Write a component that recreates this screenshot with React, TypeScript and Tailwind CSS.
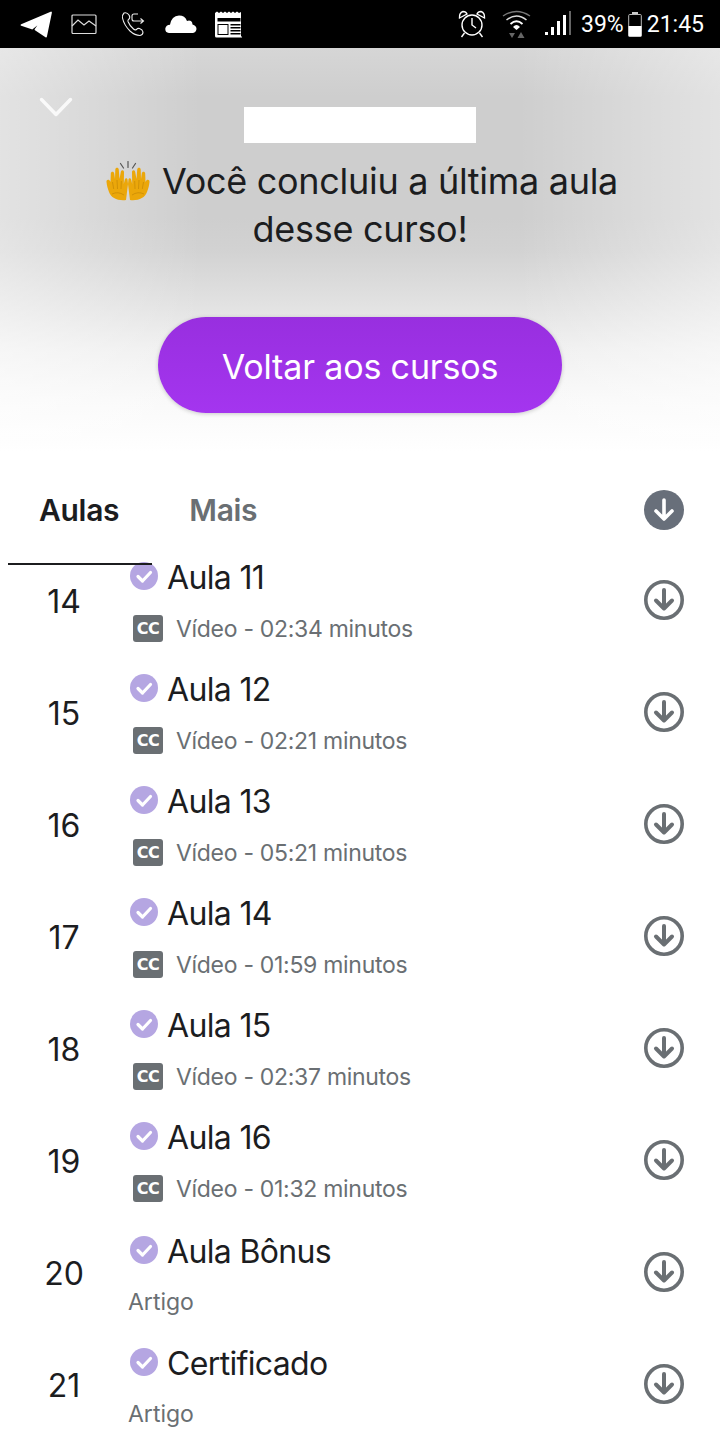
import React from "react";

const font = "font-['Inter','Liberation_Sans',sans-serif]";

function Telegram() {
  return (
    <svg width="33" height="28" viewBox="0 0 33 28" className="shrink-0">
      <path d="M1.500 15 L31 2.500 L26 26.500 L15.500 19.500 L22 10.500 L12 18.500 Z" fill="#fff" stroke="#fff" strokeWidth="1.800" strokeLinejoin="round" />
    </svg>
  );
}

function ImageIcon() {
  return (
    <svg width="26" height="21" viewBox="0 0 26 21" fill="none" stroke="#ddd" strokeWidth="1.200" className="shrink-0">
      <rect x="1" y="1" width="24" height="18.500" rx="1" />
      <path d="M1 12 L7 6 L13 11 L18 7 L25 12" />
    </svg>
  );
}

function PhoneIcon() {
  return (
    <svg width="24" height="26" viewBox="0 0 24 26" fill="none" stroke="#eee" strokeWidth="1.100" className="shrink-0">
      <path d="M3 2 Q1 4 1.500 7 Q3 14 9 20 Q14 24.500 19 24.500 Q22 24 22 21 Q21.500 18.500 18.500 17.500 Q16.500 17 15.500 18.500 Q14 19.500 12.500 18 Q8.500 14.500 7 10.500 Q6.500 9 8 8 Q9.500 6.500 8 4 Q6 1 3 2 Z" />
      <path d="M17 3 H13 Q11 3 11 5 V8 Q11 10 13 10 H22 M19.500 7.500 L22.500 10 L19.500 12.500" />
    </svg>
  );
}

function CloudIcon() {
  return (
    <svg width="32" height="19" viewBox="0 0 32 19" className="shrink-0">
      <path d="M4 18 Q0 17.500 0.300 13.500 Q1 10 5 9.800 Q6.500 1 14 0.600 Q20 0.600 22 6 Q24 4.800 26 6 Q27.500 7 27.500 9.500 Q31.500 10.500 31.500 14 Q31 17.500 28 18 Z" fill="#fff" />
    </svg>
  );
}

function NewsIcon() {
  return (
    <svg width="30" height="27" viewBox="0 0 30 27" className="shrink-0">
      <path d="M1 2 l2 -1.500 2 1.500 2 -1.500 2 1.500 2 -1.500 2 1.500 2 -1.500 2 1.500 2 -1.500 2 1.500 2 -1.500 2 1.500 2 -1 V25 Q29 26.500 27.500 26.500 H2.500 Q1 26.500 1 25 Z" fill="#fff" />
      <rect x="3.500" y="7" width="23" height="3.500" fill="#000" />
      <rect x="3.500" y="13" width="11" height="11" fill="#000" />
      <rect x="4.500" y="14" width="9" height="9" fill="#fff" />
      <rect x="16.500" y="13" width="10" height="1.500" fill="#000" />
      <rect x="16.500" y="16" width="10" height="1.500" fill="#000" />
      <rect x="16.500" y="19" width="10" height="1.500" fill="#000" />
      <rect x="16.500" y="22" width="10" height="1.500" fill="#000" />
    </svg>
  );
}

function AlarmIcon() {
  return (
    <svg width="28" height="28" viewBox="0 0 28 28" fill="none" stroke="#fff" strokeWidth="1.400" className="shrink-0">
      <circle cx="14" cy="15" r="10" />
      <path d="M14 8 V15 L18 18" />
      <path d="M1.500 8 Q1 3 5 1.500 Q8 1.500 9 4 Z M26.500 8 Q27 3 23 1.500 Q20 1.500 19 4 Z" />
      <path d="M6.500 23 L3.500 27 M21.500 23 L24.500 27" />
    </svg>
  );
}

function WifiIcon() {
  return (
    <svg width="30" height="30" viewBox="0 0 30 30" fill="none" className="shrink-0">
      <path d="M1 7 Q14.500 -2 28 7" stroke="#777" strokeWidth="1.400" />
      <path d="M4.500 11 Q14.500 3 24.500 11" stroke="#ddd" strokeWidth="1.600" />
      <path d="M8.500 15 Q14.500 9.500 20.500 15" stroke="#fff" strokeWidth="1.800" />
      <path d="M11 18 Q14.500 14 18 18 L14.500 21 Z" fill="#fff" />
      <path d="M7 24 H13 L10 29 Z" fill="#666" />
      <path d="M19 23 L22.500 29 H15.500 Z" fill="#666" />
    </svg>
  );
}

function SignalIcon() {
  return (
    <div className="flex items-end gap-[3px] h-[24px] shrink-0 translate-y-[-1px]">
      <div className="w-[3px] h-[3px] bg-white" />
      <div className="w-[3px] h-[8px] bg-white" />
      <div className="w-[3px] h-[14px] bg-white" />
      <div className="w-[3px] h-[20px] bg-white" />
      <div className="w-[2px] h-[24px] bg-[#666]" />
    </div>
  );
}

function BatteryIcon() {
  return (
    <svg width="14" height="25" viewBox="0 0 14 25" className="shrink-0">
      <rect x="4" y="0" width="6" height="2.500" fill="#ccc" />
      <rect x="0.700" y="2.500" width="12.600" height="21.800" rx="1" fill="#000" stroke="#bbb" strokeWidth="1" />
      <rect x="0.500" y="14" width="13" height="10.500" fill="#fff" />
    </svg>
  );
}

function Hand({ flip }: { flip?: boolean }) {
  return (
    <g transform={flip ? "translate(46 0) scale(-1 1)" : undefined}>
      <path
        d="M21 39 C13 40 6 37 4 31 C2.500 27 2 25 1.500 21 C1.200 18.500 4 18 5 20 L5.500 21 L5.800 12.500 C5.900 10 9 10 9.200 12.500 L10 18 L10.300 8.800 C10.400 6.200 13.600 6.200 13.800 8.800 L14.500 18 L15.800 11 C16.300 8.500 19.200 9 19 11.500 L18.800 23 L19.700 19 C20 17 22 16.500 22.500 18.500 L23 23 Z"
        fill="#EBA70A"
      />
      <path d="M7.500 21 L8.700 28 M12 19 L12.500 28 M16.300 20 L16 28 M7 33 Q13 30 19 34" fill="none" stroke="#C98C06" strokeWidth="0.800" />
    </g>
  );
}

function Hands() {
  return (
    <svg width="46" height="40" viewBox="0 0 46 40" className="shrink-0">
      <path d="M15.500 2.500 L18.500 7 M23 0.500 V6.500 M30.500 2.500 L27.500 7" stroke="#555" strokeWidth="1.200" strokeLinecap="round" />
      <Hand />
      <Hand flip />
    </svg>
  );
}

function Check() {
  return (
    <svg width="28" height="28" viewBox="0 0 28 28" className="shrink-0">
      <circle cx="14" cy="14" r="14" fill="#B5A6E2" />
      <path d="M8 14.500 L12.500 19 L20.500 10.500" fill="none" stroke="#fff" strokeWidth="3.200" strokeLinecap="round" strokeLinejoin="round" />
    </svg>
  );
}

function DownloadOutline() {
  return (
    <svg width="40" height="40" viewBox="0 0 40 40" fill="none" className="shrink-0">
      <circle cx="20" cy="20" r="18.200" stroke="#6A6F73" strokeWidth="3.600" />
      <path d="M20 10 V28 M12 20.500 L20 28.500 L28 20.500" stroke="#6A6F73" strokeWidth="4" strokeLinecap="round" strokeLinejoin="round" />
    </svg>
  );
}

function DownloadFilled() {
  return (
    <svg width="40" height="40" viewBox="0 0 40 40" fill="none" className="shrink-0">
      <circle cx="20" cy="20" r="20" fill="#686F7A" />
      <path d="M20 10 V29 M12 21 L20 29 L28 21" stroke="#fff" strokeWidth="3.600" strokeLinecap="round" strokeLinejoin="round" />
    </svg>
  );
}

function CC() {
  return (
    <div className="w-[30px] h-[27px] rounded-[3px] bg-[#6A6F73] flex items-center justify-center shrink-0">
      <span className="text-[16px] leading-none font-bold text-white font-['DejaVu_Sans',sans-serif] tracking-[-0.5px]">CC</span>
    </div>
  );
}

type Lesson = { n: number; title: string; meta: string; video: boolean };

const lessons: Lesson[] = [
  { n: 14, title: "Aula 11", meta: "Vídeo - 02:34 minutos", video: true },
  { n: 15, title: "Aula 12", meta: "Vídeo - 02:21 minutos", video: true },
  { n: 16, title: "Aula 13", meta: "Vídeo - 05:21 minutos", video: true },
  { n: 17, title: "Aula 14", meta: "Vídeo - 01:59 minutos", video: true },
  { n: 18, title: "Aula 15", meta: "Vídeo - 02:37 minutos", video: true },
  { n: 19, title: "Aula 16", meta: "Vídeo - 01:32 minutos", video: true },
  { n: 20, title: "Aula Bônus", meta: "Artigo", video: false },
  { n: 21, title: "Certificado", meta: "Artigo", video: false },
];

function Row({ l }: { l: Lesson }) {
  return (
    <div className="h-[112px] flex items-center shrink-0">
      <div className="w-[128px] text-center text-[32px] leading-none text-[#1c1d1f]">{l.n}</div>
      <div className={`flex-1 min-w-0 flex flex-col ${l.video ? "pb-[3px]" : "pt-[1px]"}`}>
        <div className="flex items-center gap-[9px]">
          <div className="ml-[2px] -mt-[4px]">
            <Check />
          </div>
          <span className="text-[32px] leading-[40px] text-[#1c1d1f] tracking-[-0.65px]">{l.title}</span>
        </div>
        {l.video ? (
          <div className="flex items-center mt-[16px] ml-[5px] gap-[13px]">
            <CC />
            <span className="text-[23px] leading-[30px] text-[#6a6f73] tracking-[-0.3px]">{l.meta}</span>
          </div>
        ) : (
          <div className="text-[23px] leading-[30px] text-[#6a6f73] mt-[15px]">{l.meta}</div>
        )}
      </div>
      <div className="mr-[36px] mb-[4px]">
        <DownloadOutline />
      </div>
    </div>
  );
}

export default function App() {
  return (
    <div className={`w-[720px] h-[1440px] overflow-hidden bg-white flex flex-col ${font}`}>
      <div className="h-[48px] bg-black flex items-center justify-between pl-[20px] pr-[16px] shrink-0">
        <div className="flex items-center">
          <Telegram />
          <div className="ml-[18px]"><ImageIcon /></div>
          <div className="ml-[24px]"><PhoneIcon /></div>
          <div className="ml-[20px]"><CloudIcon /></div>
          <div className="ml-[17px]"><NewsIcon /></div>
        </div>
        <div className="flex items-center">
          <AlarmIcon />
          <div className="ml-[16px]"><WifiIcon /></div>
          <div className="ml-[13px]"><SignalIcon /></div>
          <span className="ml-[10px] text-[23px] leading-none text-white font-['Roboto',sans-serif]">39%</span>
          <div className="ml-[4px]"><BatteryIcon /></div>
          <span className="ml-[5px] text-[23px] leading-none text-white font-['Roboto',sans-serif]">21:45</span>
        </div>
      </div>

      <div className="relative h-[404px] shrink-0 flex flex-col items-center bg-[linear-gradient(to_right,rgba(255,255,255,0.42)_0%,rgba(255,255,255,0)_28%,rgba(255,255,255,0)_72%,rgba(255,255,255,0.42)_100%),linear-gradient(to_bottom,#d6d6d6_0%,#cecece_12%,#cecece_42%,#d2d2d2_50%,#e0e0e0_62%,#f0f0f0_75%,#f9f9f9_87%,#ffffff_100%)]">
        <div className="absolute left-[39px] top-[49px]">
          <svg width="34" height="21" viewBox="0 0 34 21" fill="none" stroke="#fff" strokeWidth="3.500" opacity="0.85" strokeLinecap="round" strokeLinejoin="round">
            <path d="M2.500 2.500 L17 17.500 L31.500 2.500" />
          </svg>
        </div>
        <div className="w-[232px] h-[36px] bg-white mt-[59px]" />
        <div className="mt-[14px] w-[560px] text-center text-[36px] leading-[48px] text-[#1c1d1f] tracking-[-0.3px]">
          <div className="flex items-center justify-center gap-[11px] pl-[3px]">
            <Hands />
            <span>Você concluiu a última aula</span>
          </div>
          <div>desse curso!</div>
        </div>
        <div className="mt-[64px] w-[404px] h-[96px] rounded-full shadow-[0_1px_4px_rgba(0,0,0,0.2)] flex items-center justify-center text-[34px] tracking-[-0.15px] text-white pt-[2px] bg-[linear-gradient(to_bottom,#982fdf,#a435ef)]">
          Voltar aos cursos
        </div>
      </div>

      <div className="h-[113px] shrink-0 relative">
        <div className="absolute left-[8px] top-[111px] w-[144px] h-[2px] bg-[#1c1d1f]" />
        <div className="flex items-center h-[116px] pl-[39px] pr-[36px]">
          <span className="text-[30px] font-semibold text-[#1c1d1f] tracking-[-0.3px]">Aulas</span>
          <span className="ml-[70px] text-[30px] font-semibold text-[#6a6f73] tracking-[-0.3px]">Mais</span>
          <div className="ml-auto">
            <DownloadFilled />
          </div>
        </div>
      </div>

      <div className="flex-1 min-h-0">
        <div className="-mt-[19px] flex flex-col">
          {lessons.map((l) => (
            <Row key={l.n} l={l} />
          ))}
        </div>
      </div>
    </div>
  );
}
